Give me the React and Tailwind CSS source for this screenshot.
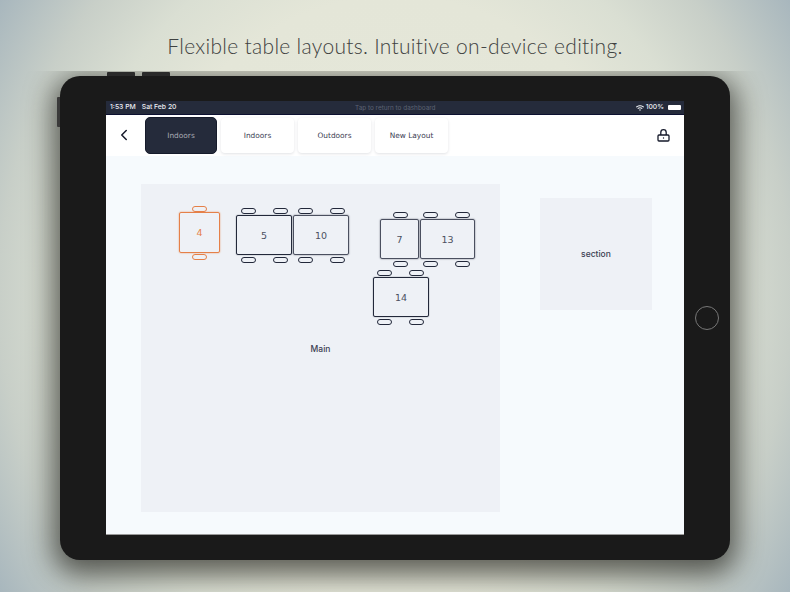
import { ChevronLeft } from "lucide-react";
import { FaWifi } from "react-icons/fa";

const uiFont = "font-['DejaVu_Sans','Liberation_Sans',sans-serif]";
const statusFont = "font-['Inter','Liberation_Sans',sans-serif]";
const labelFont = "font-['Inter','Liberation_Sans',sans-serif]";
const backdrop =
  "bg-[radial-gradient(ellipse_440px_500px_at_395px_296px,#e6e8da_0%,#e4e6d8_60%,#dadfd3_75%,#c8cfc8_90%,#a7b6bd_108%)]";

const tabs = ["Indoors", "Outdoors", "New Layout"];

const dark = "border border-[#22283a] shadow-[0_0_1px_#22283a] text-[#4b5060]";
const grey = "border border-[#4a4f5f] shadow-[0_0_1.5px_#4a4f5f] text-[#4b5060]";
const orange = "border border-[#e58048] shadow-[0_0_1.5px_#e58048] text-[#e58048]";

const tables = [
  { label: "4", box: "left-[38px] top-[28px] w-[41px] h-[41px]", color: orange },
  { label: "5", box: "left-[95px] top-[31px] w-[56px] h-[40px]", color: dark },
  { label: "10", box: "left-[152px] top-[31px] w-[56px] h-[40px]", color: grey },
  { label: "7", box: "left-[239px] top-[35px] w-[39px] h-[40px]", color: grey },
  { label: "13", box: "left-[279px] top-[35px] w-[55px] h-[40px]", color: grey },
  { label: "14", box: "left-[232px] top-[93px] w-[56px] h-[40px]", color: dark },
];

const chairs = [
  { pos: "left-[51px] top-[22px]", color: "border-[#e58048]" },
  { pos: "left-[51px] top-[70px]", color: "border-[#e58048]" },
  { pos: "left-[100px] top-[24px]" },
  { pos: "left-[132px] top-[24px]" },
  { pos: "left-[100px] top-[73px]" },
  { pos: "left-[132px] top-[73px]" },
  { pos: "left-[157px] top-[24px]" },
  { pos: "left-[189px] top-[24px]" },
  { pos: "left-[157px] top-[73px]" },
  { pos: "left-[189px] top-[73px]" },
  { pos: "left-[252px] top-[28px]" },
  { pos: "left-[252px] top-[77px]" },
  { pos: "left-[282px] top-[28px]" },
  { pos: "left-[314px] top-[28px]" },
  { pos: "left-[282px] top-[77px]" },
  { pos: "left-[314px] top-[77px]" },
  { pos: "left-[236px] top-[86px]" },
  { pos: "left-[268px] top-[86px]" },
  { pos: "left-[236px] top-[135px]" },
  { pos: "left-[268px] top-[135px]" },
];

function LockIcon() {
  return (
    <svg width="13" height="13" viewBox="0 0 13 13" fill="none" stroke="#15192a" strokeWidth="1.3">
      <rect x="1" y="6" width="11" height="6" rx="1" />
      <path d="M3.8 6V3.4a2.7 2.7 0 0 1 5.4 0V6" />
      <circle cx="6.5" cy="9" r="0.7" fill="#15192a" stroke="none" />
    </svg>
  );
}

function StatusBar() {
  return (
    <div className={`${statusFont} relative flex h-[14px] items-center justify-between border-b border-[#0c1030] bg-[#252b3b] pl-[4px] pr-[3px] text-[#eceef2]`}>
      <div className="flex gap-[6px] text-[6.8px] font-medium">
        <span>1:53 PM</span>
        <span>Sat Feb 20</span>
      </div>
      <span className="absolute left-[249px] top-[3px] text-[6.4px] text-[#5c6272]">Tap to return to dashboard</span>
      <div className="flex items-center gap-[2px] text-[6.8px] font-medium">
        <FaWifi size={8} />
        <span>100%</span>
        <div className="ml-[2px] h-[5px] w-[13px] rounded-[1px] bg-white" />
      </div>
    </div>
  );
}

function NavBar() {
  return (
    <div className={`${uiFont} flex h-[41px] items-center bg-white pb-[1px] text-[7.4px] text-[#3b4052]`}>
      <div className="flex w-[39px] justify-center pr-[3px]">
        <ChevronLeft size={18} strokeWidth={2} className="text-[#15192a]" />
      </div>
      <div className="flex h-[37px] w-[72px] items-center justify-center rounded-[5px] border border-[#161b2b] bg-[#252b3b] pt-[2px] text-[#a9acb5]">
        Indoors
      </div>
      {tabs.map((t) => (
        <div key={t} className="ml-[4px] flex h-[35px] w-[73px] items-center justify-center rounded-[4px] bg-white pt-[2px] shadow-[0_1px_3px_rgba(40,50,70,0.14)]">
          {t}
        </div>
      ))}
      <div className="ml-auto mr-[14px] flex">
        <LockIcon />
      </div>
    </div>
  );
}

function FloorPlan() {
  return (
    <div className="relative h-[328px] w-[359px] bg-[#eef1f6]">
      {tables.map((t) => (
        <div key={t.label} className={`absolute flex items-center justify-center rounded-[2px] pt-[2px] text-[9.5px] ${t.box} ${t.color}`}>
          {t.label}
        </div>
      ))}
      {chairs.map((c, i) => (
        <div key={i} className={`absolute h-[6px] w-[15px] rounded-full border ${c.pos} ${c.color || "border-[#22283a]"}`} />
      ))}
      <div className={`${labelFont} flex h-full items-center justify-center pt-[3px]`}>
        <span className="text-[8.5px] font-medium text-[#3b4052]">Main</span>
      </div>
    </div>
  );
}

function Tablet() {
  return (
    <div className="relative ml-[60px] mt-[5px] h-[484px] w-[670px] rounded-[20px] bg-[#1a1a1a] pl-[46px] pr-[46px] pt-[25px] shadow-[0_8px_28px_7px_rgba(20,20,15,0.65)]">
      <div className="absolute left-[47px] top-[-4px] h-[4px] w-[28px] rounded-t-[1px] bg-[#2a2a2a]" />
      <div className="absolute left-[82px] top-[-4px] h-[4px] w-[28px] rounded-t-[1px] bg-[#2a2a2a]" />
      <div className="absolute left-[-3px] top-[21px] h-[30px] w-[3px] rounded-l-[1px] bg-[#3a3a3a]" />
      <div className="absolute left-[635px] top-[230px] h-[24px] w-[24px] rounded-full border border-[#777]" />

      <div className="h-[434px] w-[578px] overflow-hidden border-b border-[#999] bg-[#f6fafd]">
        <StatusBar />
        <NavBar />
        <div className={`${uiFont} flex items-start pl-[35px] pt-[28px]`}>
          <FloorPlan />
          <div className={`${labelFont} ml-[40px] mt-[14px] flex h-[112px] w-[112px] items-center justify-center bg-[#eef1f6] pt-[1px] text-[8.5px] font-medium text-[#3b4052]`}>
            section
          </div>
        </div>
      </div>
    </div>
  );
}

export default function App() {
  return (
    <div className={`relative h-[592px] w-[790px] overflow-hidden ${backdrop}`}>
      <div className={`relative z-10 flex h-[71px] items-start justify-center pt-[32px] ${backdrop}`}>
        <h1 className="font-['Lato','Liberation_Sans',sans-serif] text-[21px] font-light leading-[28px] tracking-[0.3px] text-[#3f4241]">
          Flexible table layouts. Intuitive on-device editing.
        </h1>
      </div>
      <Tablet />
    </div>
  );
}
